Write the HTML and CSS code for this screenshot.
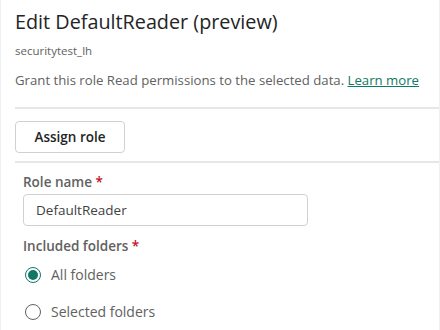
FILE: index.html
```html
<!DOCTYPE html>
<html lang="en">
<head>
    <meta charset="UTF-8">
    <meta name="viewport" content="width=device-width, initial-scale=1.0">
    <title>Edit DefaultReader</title>
    <link rel="stylesheet" href="styles.css">
</head>
<body>
    <div class="panel">
        <h1 class="title">Edit DefaultReader (preview)</h1>
        <p class="subtitle">securitytest_lh</p>
        <p class="desc">Grant this role Read permissions to the selected data. <a href="#" class="link">Learn more</a></p>

        <div class="toolbar">
            <button class="button">Assign role</button>
        </div>

        <div class="form">
            <label class="label" for="roleName">Role name <span class="req">*</span></label>
            <input type="text" id="roleName" class="input" value="DefaultReader">

            <div class="label label-folders">Included folders <span class="req">*</span></div>
            <label class="radio">
                <span class="dot checked"></span>
                <span>All folders</span>
            </label>
            <label class="radio">
                <span class="dot"></span>
                <span>Selected folders</span>
            </label>
        </div>
    </div>
</body>
</html>
```

FILE: styles.css
```css
body {
    margin: 0;
    font-family: "Open Sans", "Noto Sans", sans-serif;
    background-color: #ffffff;
    color: #424242;
}

.panel {
    height: 330px;
    box-sizing: border-box;
    border-left: 1px solid #f0f0f0;
    border-right: 1px solid #f0f0f0;
    padding: 8px 0 0 14px;
    overflow: hidden;
}

.title {
    margin: 0;
    font-size: 19.8px;
    font-weight: 400;
    line-height: 28px;
    color: #242424;
}

.subtitle {
    margin: 7px 0 0;
    font-size: 11.5px;
    line-height: 16px;
    color: #616161;
}

.desc {
    margin: 11px 0 0;
    font-size: 13.2px;
    line-height: 20px;
    color: #616161;
    white-space: nowrap;
}

.link {
    color: #117865;
}

.toolbar {
    margin-top: 17px;
    border-top: 2px solid #e6e6e6;
    border-bottom: 2px solid #e6e6e6;
    padding: 12px 0 8px;
}

.button {
    font-family: inherit;
    font-size: 13.5px;
    font-weight: 600;
    color: #242424;
    background-color: #ffffff;
    border: 1px solid #d1d1d1;
    border-radius: 4px;
    width: 110px;
    height: 32px;
    padding: 0;
}

.form {
    padding: 9px 0 0 8px;
}

.label {
    display: block;
    font-size: 13.5px;
    font-weight: 600;
    line-height: 20px;
    color: #616161;
}

.req {
    color: #c50f1f;
}

.input {
    display: block;
    box-sizing: border-box;
    width: 285px;
    height: 32px;
    margin-top: 2px;
    padding: 0 12px;
    font-family: inherit;
    font-size: 13.5px;
    color: #424242;
    border: 1px solid #d1d1d1;
    border-radius: 4px;
}

.label-folders {
    margin-top: 10px;
}

.radio {
    display: flex;
    align-items: center;
    gap: 10px;
    height: 37px;
    font-size: 14px;
    color: #616161;
}

.dot {
    width: 16px;
    height: 16px;
    box-sizing: border-box;
    border: 1px solid #616161;
    border-radius: 50%;
    margin-left: 2px;
    display: flex;
    align-items: center;
    justify-content: center;
}

.dot.checked {
    border-color: #117865;
}

.dot.checked::after {
    content: "";
    width: 10px;
    height: 10px;
    border-radius: 50%;
    background-color: #117865;
}
```
